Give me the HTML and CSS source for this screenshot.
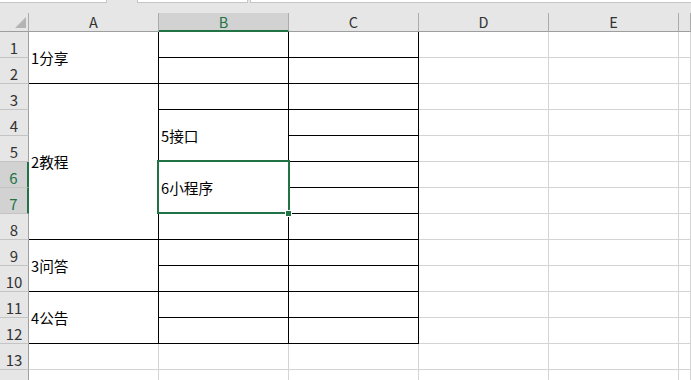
FILE: index.html
```html
<!DOCTYPE html>
<html lang="zh-CN">
<head>
  <meta charset="UTF-8" />
  <meta name="viewport" content="width=device-width, initial-scale=1.0" />
  <title>工作表</title>
  <link rel="stylesheet" href="styles.css">
</head>
<body>
  <div class="tabs">
    <div class="tab tab-1"></div>
    <div class="tab tab-2"></div>
    <div class="tab tab-3"></div>
  </div>

  <div class="sheet">
    <div class="corner"><span class="corner-mark"></span></div>
    <div class="col-head">A</div>
    <div class="col-head is-active">B</div>
    <div class="col-head">C</div>
    <div class="col-head">D</div>
    <div class="col-head">E</div>
    <div class="col-head"></div>

    <!-- row 1 -->
    <div class="row-head">1</div>
    <div class="cell boxed span-2">1分享</div>
    <div class="cell boxed"></div>
    <div class="cell boxed"></div>
    <div class="cell"></div><div class="cell"></div><div class="cell"></div>
    <!-- row 2 -->
    <div class="row-head">2</div>
    <div class="cell boxed"></div>
    <div class="cell boxed"></div>
    <div class="cell"></div><div class="cell"></div><div class="cell"></div>
    <!-- row 3 -->
    <div class="row-head">3</div>
    <div class="cell boxed span-6">2教程</div>
    <div class="cell boxed"></div>
    <div class="cell boxed"></div>
    <div class="cell"></div><div class="cell"></div><div class="cell"></div>
    <!-- row 4 -->
    <div class="row-head">4</div>
    <div class="cell boxed span-2">5接口</div>
    <div class="cell boxed"></div>
    <div class="cell"></div><div class="cell"></div><div class="cell"></div>
    <!-- row 5 -->
    <div class="row-head">5</div>
    <div class="cell boxed"></div>
    <div class="cell"></div><div class="cell"></div><div class="cell"></div>
    <!-- row 6 -->
    <div class="row-head is-active">6</div>
    <div class="cell boxed span-2 selected">6小程序</div>
    <div class="cell boxed"></div>
    <div class="cell"></div><div class="cell"></div><div class="cell"></div>
    <!-- row 7 -->
    <div class="row-head is-active">7</div>
    <div class="cell boxed"></div>
    <div class="cell"></div><div class="cell"></div><div class="cell"></div>
    <!-- row 8 -->
    <div class="row-head">8</div>
    <div class="cell boxed"></div>
    <div class="cell boxed"></div>
    <div class="cell"></div><div class="cell"></div><div class="cell"></div>
    <!-- row 9 -->
    <div class="row-head">9</div>
    <div class="cell boxed span-2">3问答</div>
    <div class="cell boxed"></div>
    <div class="cell boxed"></div>
    <div class="cell"></div><div class="cell"></div><div class="cell"></div>
    <!-- row 10 -->
    <div class="row-head">10</div>
    <div class="cell boxed"></div>
    <div class="cell boxed"></div>
    <div class="cell"></div><div class="cell"></div><div class="cell"></div>
    <!-- row 11 -->
    <div class="row-head">11</div>
    <div class="cell boxed span-2">4公告</div>
    <div class="cell boxed"></div>
    <div class="cell boxed"></div>
    <div class="cell"></div><div class="cell"></div><div class="cell"></div>
    <!-- row 12 -->
    <div class="row-head">12</div>
    <div class="cell boxed"></div>
    <div class="cell boxed"></div>
    <div class="cell"></div><div class="cell"></div><div class="cell"></div>
    <!-- row 13 -->
    <div class="row-head">13</div>
    <div class="cell"></div><div class="cell"></div><div class="cell"></div>
    <div class="cell"></div><div class="cell"></div><div class="cell"></div>
    <!-- row 14, only its top shows -->
    <div class="row-head"></div>
    <div class="cell"></div><div class="cell"></div><div class="cell"></div>
    <div class="cell"></div><div class="cell"></div><div class="cell"></div>
  </div>
</body>
</html>
```

FILE: styles.css
```css
body {
  margin: 0;
  background: #fff;
  overflow: hidden;
  font-family: "Noto Sans CJK SC", "Noto Sans", sans-serif;
  color: #000;
}

/* strip of tabs above the headers */
.tabs {
  display: flex;
  align-items: flex-start;
  height: 13px;
  background: #e6e6e6;
}
.tab {
  box-sizing: border-box;
  height: 3px;
  background: #fff;
  border: 1px solid #c6c6c6;
  border-top: 0;
}
.tab-1 {
  width: 107px;
  border-left: 0;
}
.tab-2 {
  width: 111px;
  margin-left: 30px;
}
.tab-3 {
  flex: 1;
  margin-left: 2px;
  border-right: 0;
}

/* the grid itself */
.sheet {
  display: grid;
  grid-template-columns: 29px repeat(5, 130px) 1fr;
  grid-template-rows: 19px;
  grid-auto-rows: 26px;
}
.sheet > div {
  box-sizing: border-box;
}

.corner,
.col-head,
.row-head {
  display: flex;
  justify-content: center;
  align-items: flex-end;
  background: #e6e6e6;
  color: #333;
  font-size: 14.5px;
  line-height: 1;
}
.corner,
.col-head {
  border-right: 1px solid #ababab;
  border-bottom: 1px solid #9e9e9e;
  padding-bottom: 2px;
}
.corner {
  justify-content: flex-end;
  padding: 0 2px 3px 0;
}
.corner-mark {
  width: 0;
  height: 0;
  border-left: 11px solid transparent;
  border-bottom: 11px solid #b4b4b4;
}
.col-head.is-active {
  background: #d2d2d2;
  color: #217346;
  border-bottom: 2px solid #217346;
  padding-bottom: 1px;
}

.row-head {
  border-right: 1px solid #9e9e9e;
  border-bottom: 1px solid #c4c4c4;
  padding-bottom: 2px;
  font-size: 15px;
}
.row-head.is-active {
  background: #d2d2d2;
  color: #217346;
  border-right: 2px solid #217346;
}

.cell {
  display: flex;
  align-items: center;
  padding-left: 2px;
  border-right: 1px solid #d4d4d4;
  border-bottom: 1px solid #d4d4d4;
  font-size: 14.67px;
  white-space: nowrap;
}
.cell.boxed {
  border-color: #000;
}
.span-2 {
  grid-row: span 2;
}
.span-6 {
  grid-row: span 6;
}

/* active cell outline and fill handle */
.cell.selected {
  position: relative;
}
.cell.selected::after {
  content: "";
  position: absolute;
  left: -2px;
  top: -2px;
  right: -2px;
  bottom: -1px;
  border: 2px solid #217346;
  z-index: 1;
}
.cell.selected::before {
  content: "";
  position: absolute;
  right: -4px;
  bottom: -4px;
  width: 7px;
  height: 7px;
  box-sizing: border-box;
  background: #217346;
  border: 1px solid #fff;
  z-index: 2;
}
```
